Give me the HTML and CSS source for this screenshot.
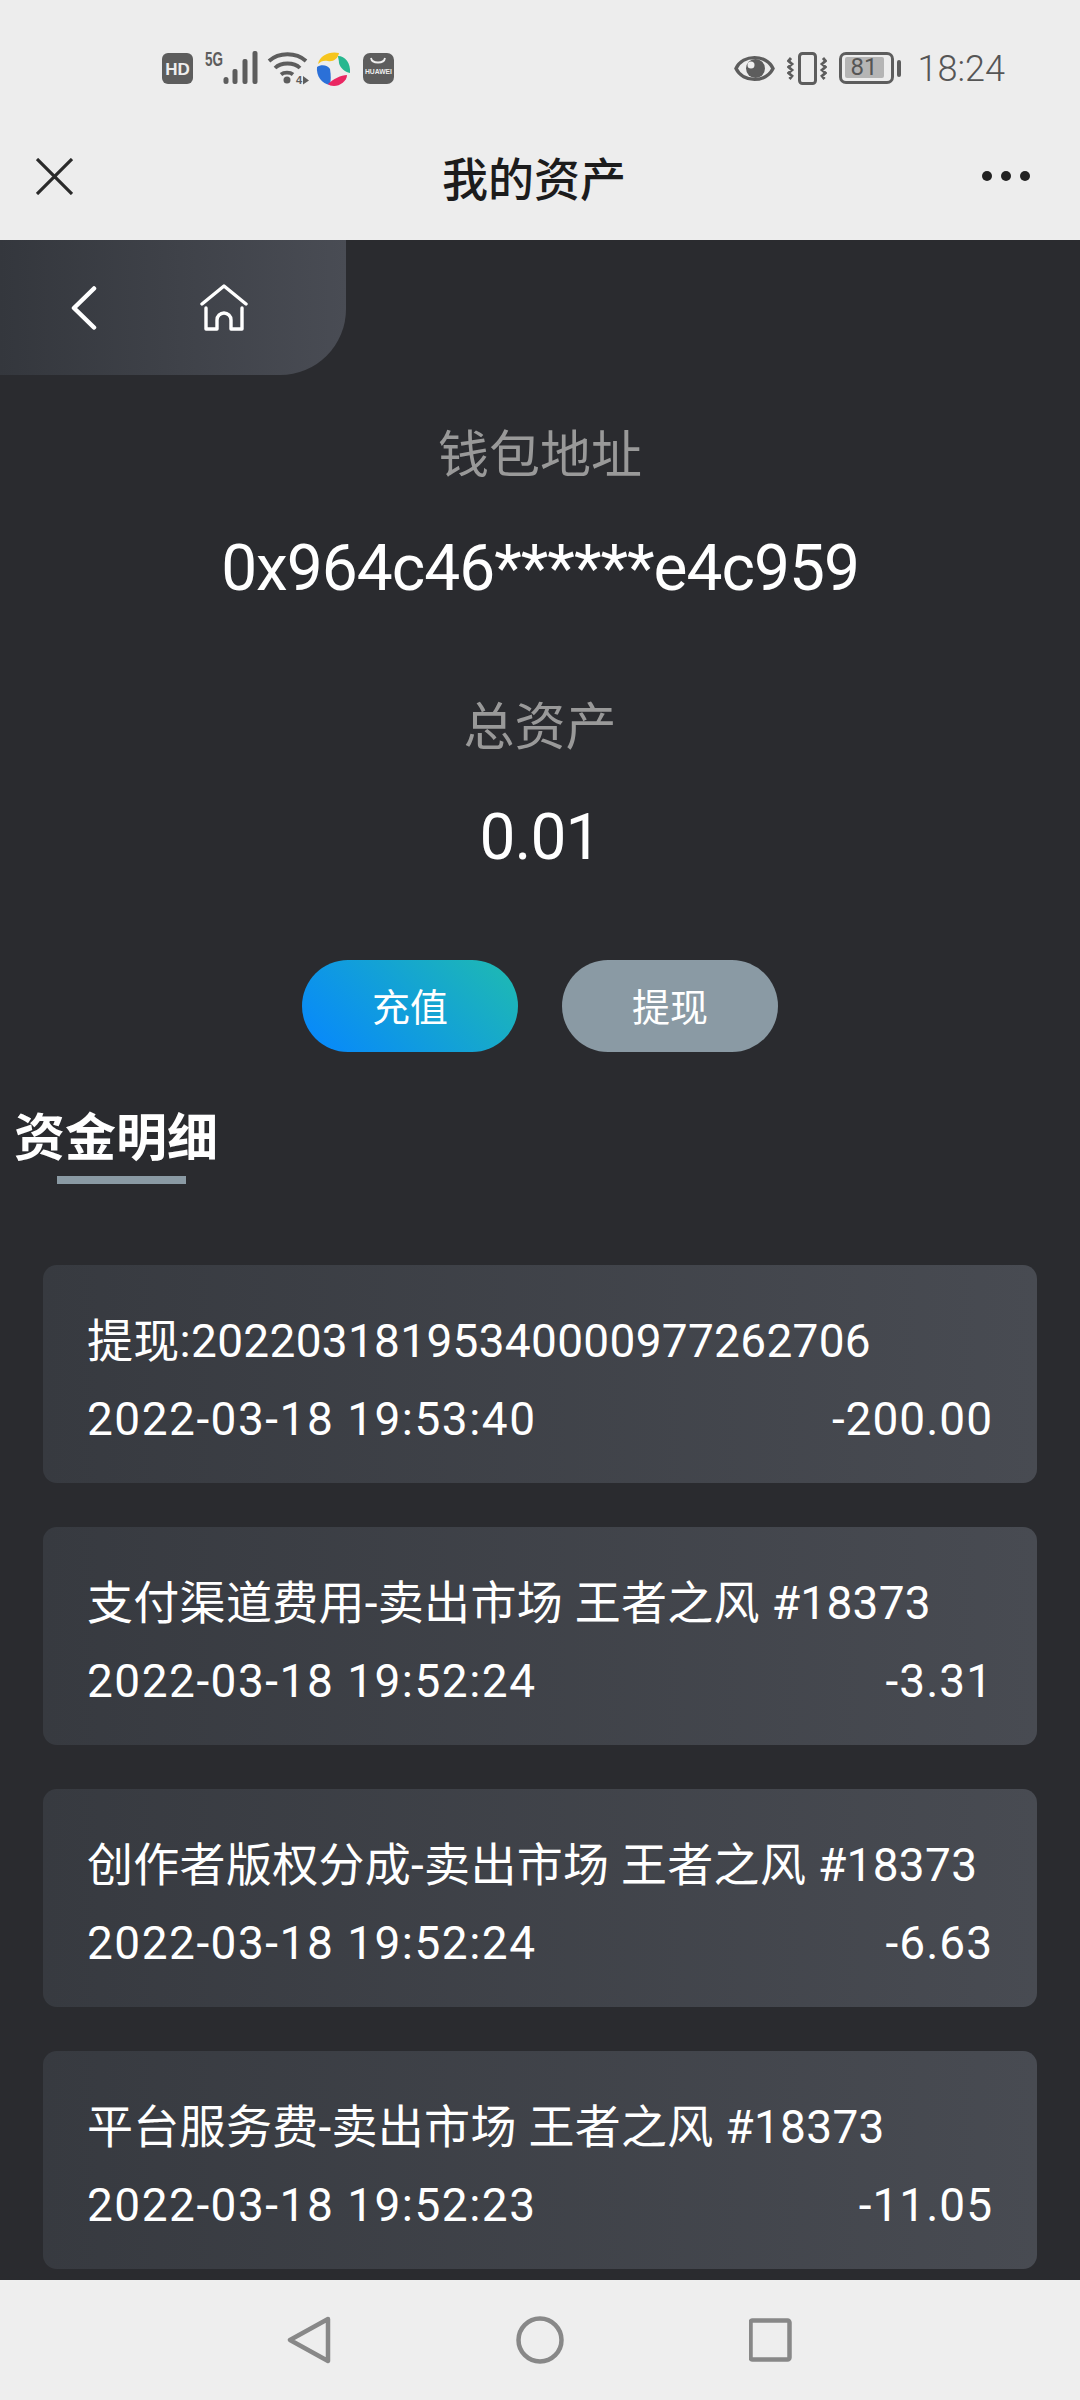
FILE: index.html
```html
<!DOCTYPE html>
<html lang="zh-CN">

<head>
  <meta charset="UTF-8">
  <meta name="viewport" content="width=device-width, initial-scale=1.0">
  <title>我的资产</title>
  <link rel="stylesheet" href="styles.css">
</head>

<body>
  <div class="statusbar">
    <div class="status-left">
      <svg width="31" height="31" viewBox="0 0 31 31"><rect width="31" height="31" rx="6" fill="#5d5d5d"/><text x="15.500" y="21.500" class="hd">HD</text></svg>
      <svg width="58" height="42" viewBox="0 -4 58 42"><text x="5" y="15" class="fiveg" textLength="18" lengthAdjust="spacingAndGlyphs">5G</text><g fill="#5d5d5d"><rect x="23.500" y="26" width="5" height="7" rx="2.500"/><rect x="32.500" y="18" width="5" height="15" rx="2"/><rect x="42.500" y="8" width="5" height="25" rx="2"/><rect x="52.500" y="0" width="5" height="33" rx="2"/></g></svg>
      <svg width="44" height="34" viewBox="0 0 44 34"><g fill="none" stroke="#5d5d5d" stroke-width="3.800"><path d="M4 10C14 1 31 1 41 10"/><path d="M10 17C16 11 29 11 35 17"/><path d="M16 23.500C19 21 25 21 28 23.500"/></g><circle cx="22" cy="29" r="3.500" fill="#5d5d5d"/><text x="31" y="33" class="wifi-four">4</text><path d="M38 25l6 4.500-6 4z" fill="#5d5d5d"/></svg>
      <svg width="35" height="35" viewBox="0 0 35 35"><path d="M2 13C4 4 14 0 23 2 22 8 17 11 12 10 8 9 5 10 2 13z" fill="#f6c51e"/><path d="M22 5C29 5 35 12 34 22 29 21 24 17 23 12 23 9 22 7 22 5z" fill="#27b78f"/><path d="M1 16C5 13 12 14 14 18 15 24 15 29 14 34 6 33 0 25 1 16z" fill="#2b70d8"/><path d="M12 33C17 28 25 24 31 24 31 30 24 35 18 35 15 35 13 34 12 33z" fill="#ea2762"/></svg>
      <svg width="36" height="31" viewBox="0 0 36 31"><rect x="5" width="31" height="31" rx="7" fill="#5d5d5d"/><path d="M13 5c1 6 13 6 14 0" fill="none" stroke="#eee" stroke-width="1.800"/><text x="20.500" y="21" class="huawei" textLength="27" lengthAdjust="spacingAndGlyphs">HUAWEI</text></svg>
    </div>
    <div class="status-right">
      <svg width="41" height="27" viewBox="0 0 41 27"><path d="M2 13.500C9-1 32-1 39 13.500 32 28 9 28 2 13.500z" fill="none" stroke="#5d5d5d" stroke-width="3.400"/><circle cx="21.500" cy="13.500" r="9.500" fill="#5d5d5d"/><circle cx="17" cy="10" r="3.500" fill="#eee"/></svg>
      <svg width="40" height="33" viewBox="0 0 40 33"><rect x="12.500" y="1.500" width="16" height="30" rx="3" fill="none" stroke="#5d5d5d" stroke-width="3"/><path d="M4 6L1.500 9 5 12 1.500 15 5 18 1.500 21 5 24 2.500 27M36 6l2.500 3-3.500 3 3.500 3-3.500 3 3.500 3-3.500 3 2.500 3" fill="none" stroke="#5d5d5d" stroke-width="2.800"/></svg>
      <div class="battery">
        <div class="battery-body"><div class="battery-level">81</div></div>
        <div class="battery-cap"></div>
      </div>
      <span class="clock">18:24</span>
    </div>
  </div>

  <div class="navbar">
    <svg width="37" height="37" viewBox="0 0 37 37"><path d="M1 1l35 35M36 1L1 36" stroke="#2a2a2a" stroke-width="3.200" fill="none"/></svg>
    <h1 class="nav-title">我的资产</h1>
    <div class="nav-more"><i></i><i></i><i></i></div>
  </div>

  <main class="page">
    <div class="backbar">
      <svg width="26" height="44" viewBox="0 0 26 44"><path d="M23 2.500L3 22l20 19.500" fill="none" stroke="#fff" stroke-width="4.500" stroke-linecap="round" stroke-linejoin="round"/></svg>
      <svg width="48" height="47" viewBox="0 0 48 47"><g fill="none" stroke="#fff" stroke-width="3.400" stroke-linecap="round" stroke-linejoin="round"><path d="M2 20L24 2l22 18"/><path d="M6 24v21h11V36a7 7 0 0 1 14 0v9h11V24"/></g></svg>
    </div>

    <section class="summary">
      <p class="label">钱包地址</p>
      <p class="value">0x964c46******e4c959</p>
      <p class="label label-total">总资产</p>
      <p class="value value-total">0.01</p>
    </section>

    <div class="actions">
      <button class="btn btn-primary">充值</button>
      <button class="btn btn-muted">提现</button>
    </div>

    <div class="heading">
      <h2>资金明细</h2>
      <div class="heading-bar"></div>
    </div>

    <ul class="records">
      <li class="record">
        <p>提现:20220318195340000977262706</p>
        <div class="record-row"><span class="record-time">2022-03-18 19:53:40</span><span class="record-amount">-200.00</span></div>
      </li>
      <li class="record">
        <p>支付渠道费用-卖出市场 王者之风 #18373</p>
        <div class="record-row"><span class="record-time">2022-03-18 19:52:24</span><span class="record-amount">-3.31</span></div>
      </li>
      <li class="record">
        <p>创作者版权分成-卖出市场 王者之风 #18373</p>
        <div class="record-row"><span class="record-time">2022-03-18 19:52:24</span><span class="record-amount">-6.63</span></div>
      </li>
      <li class="record">
        <p>平台服务费-卖出市场 王者之风 #18373</p>
        <div class="record-row"><span class="record-time">2022-03-18 19:52:23</span><span class="record-amount">-11.05</span></div>
      </li>
    </ul>
  </main>

  <div class="softkeys">
    <svg width="44" height="50" viewBox="0 0 44 50"><path d="M41 4L3 25l38 21z" fill="none" stroke="#888" stroke-width="4.500" stroke-linejoin="round"/></svg>
    <svg width="48" height="48" viewBox="0 0 48 48"><circle cx="24" cy="24" r="21.500" fill="none" stroke="#888" stroke-width="4.500"/></svg>
    <svg width="44" height="44" viewBox="0 0 44 44"><rect x="1.500" y="2.500" width="39" height="39" rx="2" fill="none" stroke="#888" stroke-width="4.500"/></svg>
  </div>
</body>

</html>
```

FILE: styles.css
```css
:root {
  font-family: Roboto, "Noto Sans CJK SC", sans-serif;
}

* {
  box-sizing: border-box;
}

body {
  margin: 0;
  width: 1080px;
  height: 2400px;
  background-color: #2a2b2f;
  color: white;
  display: flex;
  flex-direction: column;
  overflow: hidden;
}

p, h1, h2, ul {
  margin: 0;
  padding: 0;
}

/* status bar */
.statusbar {
  height: 136px;
  background-color: #ededed;
  display: flex;
  justify-content: space-between;
  align-items: center;
  padding: 0 75px 0 162px;
  flex-shrink: 0;
}

.status-left, .status-right {
  display: flex;
  align-items: center;
  gap: 7px;
}

.hd {
  font-family: "Liberation Sans", sans-serif;
  font-size: 17px;
  font-weight: 700;
  fill: #eee;
  text-anchor: middle;
}

.fiveg {
  font-family: "Liberation Sans", sans-serif;
  font-size: 20px;
  font-weight: 700;
  fill: #5d5d5d;
}

.wifi-four {
  font-family: "Liberation Sans", sans-serif;
  font-size: 11px;
  font-weight: 700;
  fill: #5d5d5d;
}

.huawei {
  font-family: "Liberation Sans", sans-serif;
  font-size: 7.500px;
  font-weight: 700;
  fill: #eee;
  text-anchor: middle;
}

.status-right {
  gap: 12px;
}

.battery {
  display: flex;
  align-items: center;
  gap: 3px;
}

.battery-body {
  width: 55px;
  height: 32px;
  border: 3px solid #5d5d5d;
  border-radius: 7px;
  padding: 2px 3px;
}

.battery-level {
  width: 39px;
  height: 21px;
  background-color: #b5b5b5;
  border-radius: 2px;
  color: #555;
  font-size: 24px;
  line-height: 21px;
  text-align: center;
}

.battery-cap {
  width: 4px;
  height: 17px;
  background-color: #5d5d5d;
  border-radius: 2px;
}

.clock {
  font-size: 36px;
  font-weight: 300;
  color: #555;
  margin-left: 5px;
  padding-top: 2px;
}

/* title bar */
.navbar {
  height: 104px;
  background-color: #ededed;
  display: flex;
  justify-content: space-between;
  align-items: center;
  padding: 0 50px 24px 36px;
  flex-shrink: 0;
}

.nav-title {
  flex: 1;
  text-align: center;
  font-size: 46px;
  font-weight: 500;
  color: #1c1c1c;
  margin-left: 13px;
}

.nav-more {
  display: flex;
  gap: 9px;
}

.nav-more i {
  width: 10px;
  height: 10px;
  border-radius: 50%;
  background-color: #222;
}

/* page */
.page {
  flex: 1;
  overflow: hidden;
}

.backbar {
  width: 346px;
  height: 135px;
  border-bottom-right-radius: 66px;
  background: linear-gradient(90deg, #34373d, #494c54);
  display: flex;
  align-items: center;
  padding-left: 71px;
  gap: 103px;
}

.summary {
  text-align: center;
  padding-top: 46px;
}

.label {
  font-size: 51px;
  line-height: 70px;
  color: #999;
}

.label-total {
  margin-top: 84px;
}

.value {
  font-size: 64px;
  line-height: 80px;
  letter-spacing: -1px;
  margin-top: 38px;
  color: white;
}

.value-total {
  margin-top: 35px;
}

.actions {
  display: flex;
  justify-content: center;
  gap: 44px;
  margin-top: 82px;
}

.btn {
  width: 216px;
  height: 92px;
  border: none;
  border-radius: 46px;
  color: white;
  font-family: inherit;
  font-size: 38px;
  padding: 0 0 4px;
}

.btn-primary {
  background: linear-gradient(45deg, #0686ff, #1fbbb0);
}

.btn-muted {
  background-color: #8a9aa4;
}

.heading {
  padding: 57px 0 0 14px;
}

.heading h2 {
  font-size: 51px;
  line-height: 60px;
  font-weight: 700;
}

.heading-bar {
  width: 129px;
  height: 8px;
  background-color: #8a9aa4;
  margin: 7px 0 0 43px;
}

.records {
  list-style: none;
  padding: 81px 43px 0;
  display: flex;
  flex-direction: column;
  gap: 44px;
}

.record {
  height: 218px;
  border-radius: 14px;
  background: linear-gradient(90deg, #373a40, #484b52);
  padding: 37px 44px 0;
  font-size: 46px;
  line-height: 78px;
}

.record p {
  letter-spacing: 0.300px;
}

.record-row {
  display: flex;
  justify-content: space-between;
}

.record-time {
  letter-spacing: 1.500px;
}

.record-amount {
  letter-spacing: 1px;
}

/* system keys */
.softkeys {
  height: 120px;
  background-color: #eee;
  display: flex;
  align-items: center;
  gap: 185px;
  padding-left: 287px;
  flex-shrink: 0;
}
```
